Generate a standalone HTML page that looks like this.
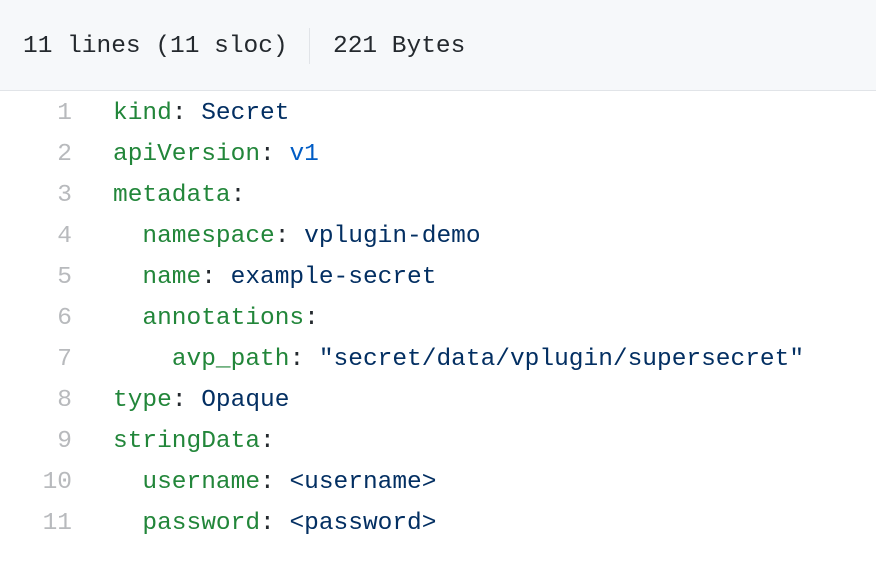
<!DOCTYPE html>
<html><head><style>
body{margin:0;width:876px;height:570px;background:#fff;overflow:hidden;font-family:"Liberation Mono",monospace;}
.hd{height:91px;background:#f6f8fa;border-bottom:1px solid #e1e4e8;box-sizing:border-box;position:relative;font-size:24.5px;color:#24292e;}
.hd span{position:absolute;top:31px;line-height:32px;}
.sep{position:absolute;left:309px;top:28px;width:1px;height:36px;background:#e1e4e8;}
.l{position:absolute;left:0;height:41px;line-height:41px;font-size:24.5px;white-space:pre;}
.n{position:absolute;right:804px;color:#b8babd;}
.c{position:absolute;left:113px;color:#24292e;}
.g{color:#22863a}.s{color:#032f62}.b{color:#005cc5}
</style></head><body>
<div class="hd"><span style="left:23px">11 lines (11 sloc)</span><div class="sep"></div><span style="left:333px">221 Bytes</span></div>
<div class="l" style="top:93px;width:876px"><span class="n">1</span><span class="c"><span class="g">kind</span>: <span class="s">Secret</span></span></div>
<div class="l" style="top:134px;width:876px"><span class="n">2</span><span class="c"><span class="g">apiVersion</span>: <span class="b">v1</span></span></div>
<div class="l" style="top:175px;width:876px"><span class="n">3</span><span class="c"><span class="g">metadata</span>:</span></div>
<div class="l" style="top:216px;width:876px"><span class="n">4</span><span class="c">  <span class="g">namespace</span>: <span class="s">vplugin-demo</span></span></div>
<div class="l" style="top:257px;width:876px"><span class="n">5</span><span class="c">  <span class="g">name</span>: <span class="s">example-secret</span></span></div>
<div class="l" style="top:298px;width:876px"><span class="n">6</span><span class="c">  <span class="g">annotations</span>:</span></div>
<div class="l" style="top:339px;width:876px"><span class="n">7</span><span class="c">    <span class="g">avp_path</span>: <span class="s">"secret/data/vplugin/supersecret"</span></span></div>
<div class="l" style="top:380px;width:876px"><span class="n">8</span><span class="c"><span class="g">type</span>: <span class="s">Opaque</span></span></div>
<div class="l" style="top:421px;width:876px"><span class="n">9</span><span class="c"><span class="g">stringData</span>:</span></div>
<div class="l" style="top:462px;width:876px"><span class="n">10</span><span class="c">  <span class="g">username</span>: <span class="s">&lt;username&gt;</span></span></div>
<div class="l" style="top:503px;width:876px"><span class="n">11</span><span class="c">  <span class="g">password</span>: <span class="s">&lt;password&gt;</span></span></div>
</body></html>
